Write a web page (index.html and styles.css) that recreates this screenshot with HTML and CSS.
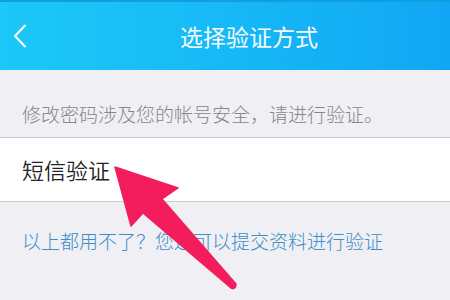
FILE: index.html
```html
<!DOCTYPE html>
<html lang="zh-CN">
<head>
<meta charset="utf-8">
<title>选择验证方式</title>
<link rel="stylesheet" href="styles.css">
</head>
<body>
<div class="page">
  <header class="header">
    <svg class="back" width="14" height="24" viewBox="0 0 14 24" aria-hidden="true">
      <path d="M12 1.5 L2 12 L12 22.5" fill="none" stroke="#ffffff" stroke-width="2" stroke-linecap="round" stroke-linejoin="round"/>
    </svg>
    <h1 class="title">选择验证方式</h1>
  </header>
  <p class="hint">修改密码涉及您的帐号安全，请进行验证。</p>
  <div class="option">短信验证</div>
  <p class="link">以上都用不了？您还可以提交资料进行验证</p>
  <svg class="arrow" width="450" height="300" viewBox="0 0 450 300" aria-hidden="true">
    <path d="M115 167 L178 188 L162 199 L236 284 Q236 290 231 288 L143 213 L131 226 Z" fill="#f31d5e" stroke="#f31d5e" stroke-width="1.5" stroke-linejoin="round"/>
  </svg>
</div>
</body>
</html>
```

FILE: styles.css
```css
* { box-sizing: border-box; }
html, body {
  margin: 0;
  padding: 0;
  background: #efeff4;
}
body {
  font-family: "Noto Sans CJK SC", "Noto Sans", sans-serif;
  width: 450px;
  height: 300px;
  overflow: hidden;
}
.page {
  position: relative;
  width: 450px;
  height: 300px;
}
.header {
  height: 70px;
  border-top: 2px solid #0f9fe0;
  background: linear-gradient(90deg, #1cc8f7 0%, #17b9f6 50%, #11a6f4 100%);
  display: flex;
  align-items: center;
  padding-left: 13px;
}
.back {
  display: block;
  flex: none;
}
.title {
  margin: 0 0 0 153px;
  font-size: 23px;
  line-height: 23px;
  font-weight: 400;
  color: #f4fbff;
}
.hint {
  margin: 0;
  padding: 34px 0 14px 22px;
  font-size: 19px;
  line-height: 19px;
  font-weight: 300;
  color: #86868b;
  border-bottom: 1px solid #cdcdd1;
}
.option {
  background: #ffffff;
  padding: 20px 0 21px 22px;
  font-size: 22px;
  line-height: 22px;
  font-weight: 350;
  color: #222222;
  border-bottom: 1px solid #cdcdd1;
}
.link {
  margin: 29px 0 0;
  padding-left: 22px;
  font-size: 19px;
  line-height: 19px;
  font-weight: 300;
  color: #3b8ec6;
}
.arrow {
  position: absolute;
  left: 0;
  top: 0;
  pointer-events: none;
}
```
